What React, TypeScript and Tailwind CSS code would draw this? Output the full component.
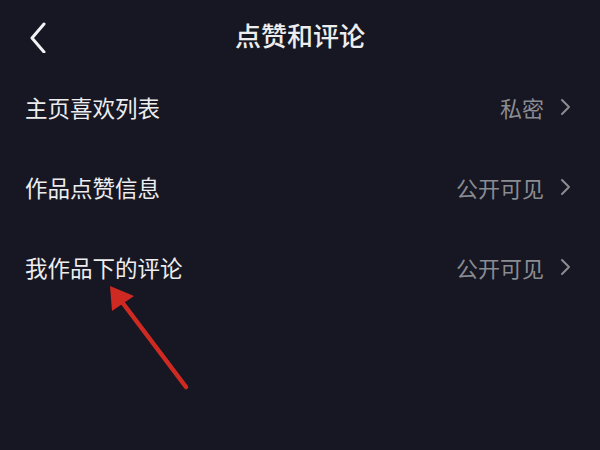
const rows = [
  { label: '主页喜欢列表', value: '私密' },
  { label: '作品点赞信息', value: '公开可见' },
  { label: '我作品下的评论', value: '公开可见' },
];

function Chevron() {
  return (
    <svg width="12" height="18" viewBox="0 0 12 18" fill="none" className="ml-[16px]">
      <path d="M2 2l7 7-7 7" stroke="#8b8c93" strokeWidth="2" strokeLinecap="round" strokeLinejoin="round" />
    </svg>
  );
}

export default function App() {
  return (
    <div
      className="relative w-[600px] h-[450px] overflow-hidden bg-[#161722] text-[#ededef]"
      style={{ fontFamily: '"Noto Sans CJK SC", "Noto Sans", sans-serif' }}
    >
      {/* Header */}
      <div className="relative flex items-center justify-center h-[70px]">
        <button className="absolute left-[24px] top-[17px] p-1">
          <svg width="20" height="32" viewBox="0 0 20 32" fill="none">
            <path d="M16 3L4 17l12 14" stroke="#f2f2f4" strokeWidth="3" strokeLinecap="round" strokeLinejoin="round" />
          </svg>
        </button>
        <h1 className="text-[26px] font-medium leading-none">点赞和评论</h1>
      </div>

      {/* Settings list */}
      <div className="-mt-[3px]">
        {rows.map((row) => (
          <div key={row.label} className="flex items-center justify-between h-[80px] pl-[25px] pr-[28px]">
            <span className="text-[22.5px] leading-none">{row.label}</span>
            <div className="flex items-center">
              <span className="text-[22px] leading-none text-[#8b8c93]">{row.value}</span>
              <Chevron />
            </div>
          </div>
        ))}
      </div>

      {/* Annotation arrow */}
      <svg className="absolute left-0 top-0 pointer-events-none" width="600" height="450" viewBox="0 0 600 450">
        <line x1="186" y1="387" x2="116" y2="294" stroke="#cf2a22" strokeWidth="4.5" strokeLinecap="round" />
        <polygon points="110,286 112,311 134,296" fill="#cf2a22" />
      </svg>
    </div>
  );
}
